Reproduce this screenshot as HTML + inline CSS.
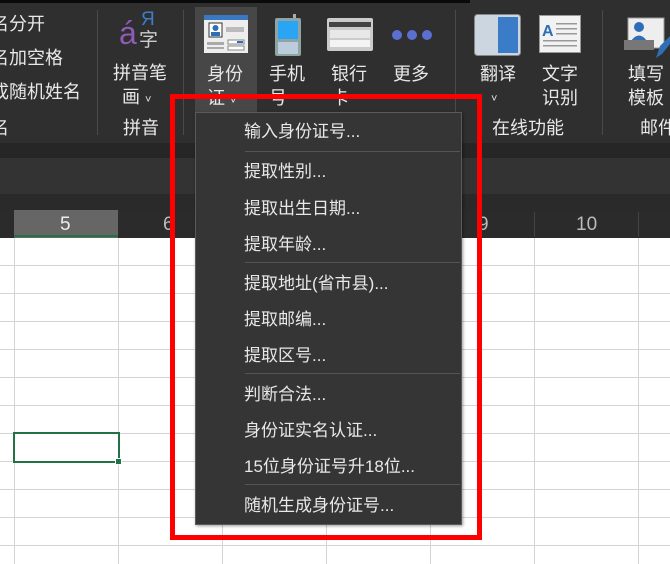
<!DOCTYPE html>
<html><head><meta charset="utf-8"><style>
*{margin:0;padding:0;box-sizing:border-box}
body{width:670px;height:564px;overflow:hidden;background:#fff;position:relative;font-family:"Liberation Sans","Noto Sans CJK SC",sans-serif;}
.a{position:absolute}
.t{position:absolute;color:#e8e8e8;font-size:18px;line-height:22px;white-space:nowrap}
.mi{position:absolute;left:244px;color:#e8e8e8;font-size:17px;line-height:22px;white-space:nowrap}
.sep{position:absolute;left:245px;width:215px;height:1px;background:#555}
.vs{position:absolute;width:1px;background:#4a4a4a;top:10px;height:125px}
.vl{position:absolute;width:1px;background:#d4d4d4;top:238px;height:326px}
.hl{position:absolute;height:1px;background:#d4d4d4;left:0;width:670px}
</style></head><body>
<div class="a" style="left:0;top:0;width:670px;height:143px;background:#2f2f2f"></div>
<div class="a" style="left:0;top:0;width:470px;height:3px;background:#0a0a0a"></div>
<div class="a" style="left:0;top:143px;width:670px;height:15px;background:#262626"></div>
<div class="a" style="left:0;top:158px;width:670px;height:36px;background:#333"></div>
<div class="a" style="left:0;top:194px;width:670px;height:16px;background:#2a2a2a"></div>
<div class="a" style="left:0;top:210px;width:670px;height:28px;background:#2b2b2b"></div>
<div class="a" style="left:14px;top:210px;width:104px;height:28px;background:#666"></div>
<div class="a" style="left:14px;top:235px;width:104px;height:2px;background:#217346"></div>
<div class="t" style="left:60px;top:214px;font-size:19px;color:#eee">5</div>
<div class="t" style="left:163px;top:214px;font-size:19px;color:#bbb">6</div>
<div class="t" style="left:478px;top:214px;font-size:19px;color:#bbb">9</div>
<div class="t" style="left:576px;top:214px;font-size:19px;color:#bbb">10</div>
<div class="a" style="left:534px;top:212px;width:1px;height:25px;background:#444"></div>
<div class="a" style="left:638px;top:212px;width:1px;height:25px;background:#444"></div>
<!-- grid -->
<div class="vl" style="left:14px"></div><div class="vl" style="left:118px"></div><div class="vl" style="left:222px"></div><div class="vl" style="left:326px"></div><div class="vl" style="left:430px"></div><div class="vl" style="left:534px"></div><div class="vl" style="left:638px"></div>
<div class="hl" style="top:265px"></div><div class="hl" style="top:293px"></div><div class="hl" style="top:321px"></div><div class="hl" style="top:349px"></div><div class="hl" style="top:377px"></div><div class="hl" style="top:405px"></div><div class="hl" style="top:433px"></div><div class="hl" style="top:461px"></div><div class="hl" style="top:489px"></div><div class="hl" style="top:517px"></div><div class="hl" style="top:545px"></div>
<div class="a" style="left:13px;top:432px;width:107px;height:31px;border:2px solid #217346"></div>
<div class="a" style="left:115px;top:458px;width:7px;height:7px;background:#217346;border:1px solid #fff"></div>
<!-- ribbon left -->
<div class="t" style="left:-9px;top:13px">名分开</div>
<div class="t" style="left:-9px;top:47px">名加空格</div>
<div class="t" style="left:-9px;top:81px">成随机姓名</div>
<div class="t" style="left:-9px;top:117px">名</div>
<div class="vs" style="left:97px"></div>
<div class="t" style="left:119px;top:17px;font-size:32px;line-height:32px;color:#8e5bb5">á</div>
<div class="t" style="left:141px;top:9px;font-size:19px;color:#3d7cc9">Я</div>
<div class="t" style="left:139px;top:30px;font-size:19px;color:#ccc">字</div>
<div class="t" style="left:113px;top:62px">拼音笔</div>
<div class="t" style="left:122px;top:86px">画 <span style="font-size:11px">˅</span></div>
<div class="t" style="left:123px;top:117px">拼音</div>
<div class="vs" style="left:183px"></div>
<!-- hovered id button -->
<div class="a" style="left:195px;top:7px;width:62px;height:105px;background:#474747"></div>
<svg class="a" style="left:204px;top:15px" width="44" height="38" viewBox="0 0 44 38">
<rect x="0" y="0" width="44" height="38" fill="#eee"/><rect x="0" y="0" width="44" height="5" fill="#3a78c2"/>
<rect x="5" y="8" width="13" height="14" fill="#fff" stroke="#333" stroke-width="1"/><circle cx="11.5" cy="13" r="3" fill="#2f6db5"/><rect x="7" y="17" width="9" height="4" fill="#2f6db5"/>
<rect x="22" y="12" width="18" height="5" fill="#bbb"/><rect x="3" y="27" width="17" height="3" fill="#aaa"/><rect x="24" y="25" width="16" height="4" fill="#fff" stroke="#888"/><rect x="33" y="26" width="6" height="2" fill="#2f6db5"/><rect x="3" y="32" width="17" height="2" fill="#aaa"/><rect x="24" y="31" width="16" height="4" fill="#fff" stroke="#888"/></svg>
<div class="t" style="left:207px;top:63px">身份</div>
<div class="t" style="left:207px;top:87px">证 <span style="font-size:11px">˅</span></div>
<svg class="a" style="left:274px;top:14px" width="28" height="42" viewBox="0 0 28 42"><rect x="19" y="0" width="3" height="5" fill="#aaa"/><rect x="1" y="4" width="26" height="38" rx="2" fill="#8fa5a3"/><rect x="4" y="7" width="20" height="18" fill="#2aa5f5"/><rect x="4" y="28" width="20" height="12" fill="#bcd"/></svg>
<div class="t" style="left:269px;top:63px">手机</div>
<div class="t" style="left:269px;top:87px">号</div>
<svg class="a" style="left:327px;top:18px" width="46" height="33" viewBox="0 0 46 33"><rect x="0" y="0" width="46" height="33" rx="2" fill="#ccc"/><rect x="2" y="4" width="42" height="5" fill="#444"/><rect x="3" y="12" width="40" height="8" fill="#e8e8e8"/><rect x="3" y="22" width="40" height="7" fill="#f4f4f4"/></svg>
<div class="t" style="left:331px;top:63px">银行</div>
<div class="t" style="left:331px;top:87px">卡</div>
<div class="a" style="left:392px;top:30px;width:10px;height:10px;border-radius:5px;background:#5b6fd0"></div>
<div class="a" style="left:407px;top:30px;width:10px;height:10px;border-radius:5px;background:#5b6fd0"></div>
<div class="a" style="left:422px;top:30px;width:10px;height:10px;border-radius:5px;background:#5b6fd0"></div>
<div class="t" style="left:393px;top:63px">更多</div>
<div class="vs" style="left:455px"></div>
<svg class="a" style="left:474px;top:14px" width="47" height="42"><rect x="0.5" y="0.5" width="46" height="41" rx="3" fill="#ccd6e0" stroke="#888"/><rect x="24" y="3" width="20" height="36" fill="#3a7cc7"/></svg>
<div class="t" style="left:480px;top:63px">翻译</div>
<div class="t" style="left:491px;top:88px;font-size:11px">˅</div>
<svg class="a" style="left:539px;top:15px" width="42" height="38"><rect x="0.5" y="0.5" width="41" height="37" fill="#f2f2f2" stroke="#999"/><text x="3" y="21" font-family="Liberation Sans" font-weight="bold" font-size="16" fill="#2f6db5">A</text><rect x="17" y="8" width="21" height="1.5" fill="#999"/><rect x="17" y="13" width="21" height="1.5" fill="#999"/><rect x="17" y="18" width="21" height="1.5" fill="#999"/><rect x="4" y="25" width="34" height="1.5" fill="#999"/><rect x="4" y="30" width="34" height="1.5" fill="#999"/></svg>
<div class="t" style="left:542px;top:63px">文字</div>
<div class="t" style="left:542px;top:87px">识别</div>
<div class="t" style="left:492px;top:117px">在线功能</div>
<div class="vs" style="left:602px"></div>
<svg class="a" style="left:624px;top:16px" width="46" height="42"><rect x="4" y="2" width="36" height="30" fill="#eee" stroke="#999"/><circle cx="15" cy="11" r="5" fill="#2f6db5"/><path d="M7 25 Q15 14 23 25Z" fill="#2f6db5"/><rect x="0" y="24" width="30" height="10" fill="#777"/><path d="M32 42 L36 30 L46 20 L46 28 L38 38Z" fill="#2f6db5"/></svg>
<div class="t" style="left:628px;top:63px">填写</div>
<div class="t" style="left:628px;top:87px">模板</div>
<div class="t" style="left:640px;top:117px">邮件</div>
<!-- menu -->
<div class="a" style="left:195px;top:112px;width:267px;height:413px;background:#353535;border:1px solid #5a5a5a;box-shadow:1px 1px 3px rgba(0,0,0,.4)"></div>
<div class="mi" style="top:121px">输入身份证号...</div>
<div class="sep" style="top:151px"></div>
<div class="mi" style="top:161px">提取性别...</div>
<div class="mi" style="top:198px">提取出生日期...</div>
<div class="mi" style="top:234px">提取年龄...</div>
<div class="sep" style="top:262px"></div>
<div class="mi" style="top:273px">提取地址(省市县)...</div>
<div class="mi" style="top:309px">提取邮编...</div>
<div class="mi" style="top:345px">提取区号...</div>
<div class="sep" style="top:373px"></div>
<div class="mi" style="top:384px">判断合法...</div>
<div class="mi" style="top:420px">身份证实名认证...</div>
<div class="mi" style="top:456px">15位身份证号升18位...</div>
<div class="sep" style="top:484px"></div>
<div class="mi" style="top:495px">随机生成身份证号...</div>
<!-- red box -->
<div class="a" style="left:170px;top:94px;width:312px;height:446px;border:5px solid #f00"></div>
</body></html>
